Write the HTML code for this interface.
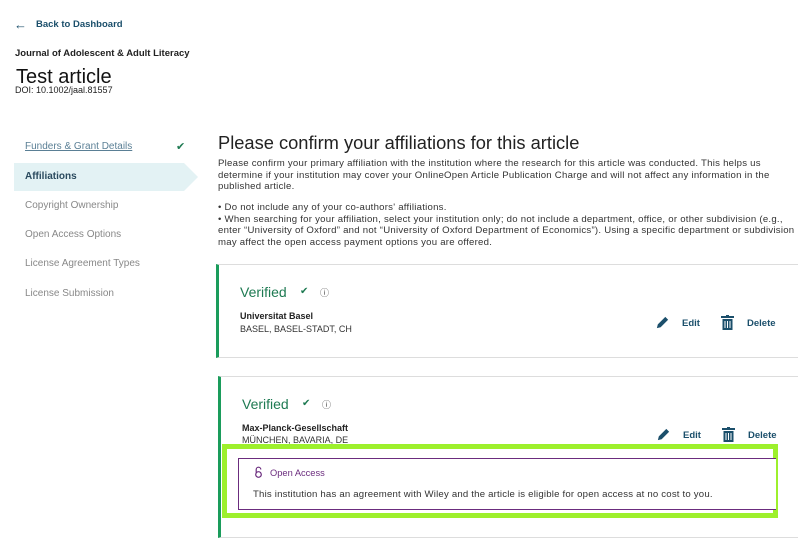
<!DOCTYPE html><html><head><style>
body{margin:0;width:798px;height:529px;overflow:hidden;background:#fff;font-family:"Liberation Sans",sans-serif;color:#222;position:relative}
.a{position:absolute;white-space:nowrap}
.nav{font-size:10px;color:#888;left:25px}
.p{font-size:9.6px;letter-spacing:0.25px;color:#333;left:218px;line-height:11.7px}
.card{position:absolute;border:1px solid #ddd;border-left:3px solid #1a9c5b;background:#fff}
.ver{font-size:14px;color:#1e7a52}
.b{font-size:9px;font-weight:bold;color:#222}
.s{font-size:9px;color:#333}
.act{font-size:9.5px;color:#1b4f6b;font-weight:bold}
</style></head><body>
<div class="a" style="left:14px;top:17px;font-size:13px;color:#1b4f6b;font-weight:bold">&#8592;</div>
<div class="a" style="left:36px;top:19px;font-size:9.5px;color:#1b4f6b;font-weight:bold">Back to Dashboard</div>
<div class="a" style="left:15px;top:48px;font-size:9.5px;font-weight:bold;color:#222">Journal of Adolescent &amp; Adult Literacy</div>
<div class="a" style="left:16px;top:66px;font-size:20px;color:#111">Test article</div>
<div class="a" style="left:15px;top:85px;font-size:9px;color:#222">DOI: 10.1002/jaal.81557</div>
<div class="a nav" style="top:141px;color:#5a7f95;text-decoration:underline">Funders &amp; Grant Details</div>
<div class="a" style="left:176px;top:140px;font-size:11px;color:#1e7a52">&#10004;</div>
<svg class="a" style="left:14px;top:163px" width="184" height="28"><polygon points="0,0 170,0 184,14 170,28 0,28" fill="#e3f2f4"/></svg>
<div class="a nav" style="top:171px;color:#2a4a5e;font-weight:bold">Affiliations</div>
<div class="a nav" style="top:200px">Copyright Ownership</div>
<div class="a nav" style="top:229px">Open Access Options</div>
<div class="a nav" style="top:258px">License Agreement Types</div>
<div class="a nav" style="top:288px">License Submission</div>
<div class="a" style="left:218px;top:132px;font-size:18.3px;color:#222">Please confirm your affiliations for this article</div>
<div class="a p" style="top:158px">Please confirm your primary affiliation with the institution where the research for this article was conducted. This helps us<br>determine if your institution may cover your OnlineOpen Article Publication Charge and will not affect any information in the<br>published article.</div>
<div class="a p" style="top:202px">• Do not include any of your co-authors' affiliations.<br>• When searching for your affiliation, select your institution only; do not include a department, office, or other subdivision (e.g.,<br>enter “University of Oxford” and not “University of Oxford Department of Economics”). Using a specific department or subdivision<br>may affect the open access payment options you are offered.</div>
<div class="card" style="left:216px;top:264px;width:590px;height:92px"></div>
<div class="a ver" style="left:240px;top:284px">Verified</div>
<div class="a" style="left:300px;top:286px;font-size:10px;color:#1e7a52">&#10004;</div>
<div class="a" style="left:320px;top:286px;font-size:9px;color:#444">&#9432;</div>
<div class="a b" style="left:240px;top:311px">Universitat Basel</div>
<div class="a s" style="left:240px;top:324px">BASEL, BASEL-STADT, CH</div>
<div class="card" style="left:218px;top:376px;width:590px;height:160px"></div>
<div class="a ver" style="left:242px;top:396px">Verified</div>
<div class="a" style="left:302px;top:398px;font-size:10px;color:#1e7a52">&#10004;</div>
<div class="a" style="left:322px;top:398px;font-size:9px;color:#444">&#9432;</div>
<div class="a b" style="left:242px;top:423px">Max-Planck-Gesellschaft</div>
<div class="a s" style="left:242px;top:435px">MÜNCHEN, BAVARIA, DE</div>
<svg class="a" style="left:655px;top:315px" width="15" height="15" viewBox="0 0 16 16"><path d="M2 14l1-4 8-8 3 3-8 8z" fill="#1b4f6b"/></svg>
<div class="a act" style="left:682px;top:318px">Edit</div>
<svg class="a" style="left:721px;top:315px" width="13" height="15" viewBox="0 0 13 15"><rect x="0" y="1" width="13" height="2" fill="#1b4f6b"/><rect x="5" y="0" width="3" height="2" fill="#1b4f6b"/><path d="M1.5 4h10v11h-10z" fill="#1b4f6b"/><path d="M4 6v7M6.5 6v7M9 6v7" stroke="#fff" stroke-width="1"/></svg>
<div class="a act" style="left:747px;top:318px">Delete</div>
<svg class="a" style="left:656px;top:427px" width="15" height="15" viewBox="0 0 16 16"><path d="M2 14l1-4 8-8 3 3-8 8z" fill="#1b4f6b"/></svg>
<div class="a act" style="left:683px;top:430px">Edit</div>
<svg class="a" style="left:722px;top:427px" width="13" height="15" viewBox="0 0 13 15"><rect x="0" y="1" width="13" height="2" fill="#1b4f6b"/><rect x="5" y="0" width="3" height="2" fill="#1b4f6b"/><path d="M1.5 4h10v11h-10z" fill="#1b4f6b"/><path d="M4 6v7M6.5 6v7M9 6v7" stroke="#fff" stroke-width="1"/></svg>
<div class="a act" style="left:748px;top:430px">Delete</div>
<div class="a" style="left:222px;top:444px;width:546px;height:64px;border:5px solid #9df02c"></div>
<div class="a" style="left:238px;top:458px;width:537px;height:50px;border:1px solid #6b2c7e;border-right:none;background:#fff"></div>
<svg class="a" style="left:254px;top:466px" width="9" height="12" viewBox="0 0 9 12"><path d="M2.2 6.5V3.5a2.3 2.3 0 0 1 4.6 0" fill="none" stroke="#6b2c7e" stroke-width="1.2"/><circle cx="4.5" cy="8.5" r="2.8" fill="none" stroke="#6b2c7e" stroke-width="1.2"/></svg>
<div class="a" style="left:270px;top:468px;font-size:9.3px;color:#6b2c7e">Open Access</div>
<div class="a" style="left:253px;top:489px;font-size:9.6px;letter-spacing:0.2px;color:#333">This institution has an agreement with Wiley and the article is eligible for open access at no cost to you.</div>
</body></html>
